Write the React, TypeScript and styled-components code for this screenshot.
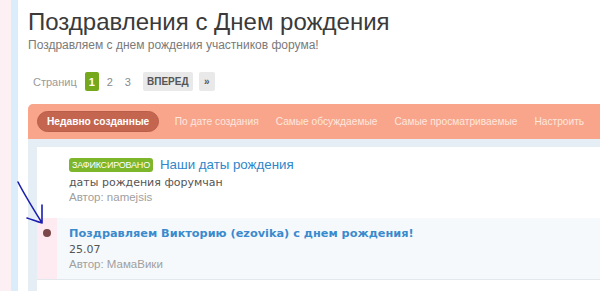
import React from 'react';
import styled, { createGlobalStyle } from 'styled-components';

const GlobalStyle = createGlobalStyle`
  html, body {
    margin: 0;
    padding: 0;
    background: #ffffff;
  }
  body {
    font-family: "Liberation Sans", Arial, sans-serif;
    overflow: hidden;
  }
`;

const tabs = ['По дате создания', 'Самые обсуждаемые', 'Самые просматриваемые', 'Настроить'];

export default function App() {
  return (
    <Page>
      <GlobalStyle />
      <Gutter />
      <Stripe />
      <Main>
        <Title>Поздравления с Днем рождения</Title>
        <Subtitle>Поздравляем с днем рождения участников форума!</Subtitle>

        <PageNav>
          <NavLabel>Страниц</NavLabel>
          <PageNum current>1</PageNum>
          <PageNum>2</PageNum>
          <PageNum>3</PageNum>
          <NavButton>ВПЕРЕД</NavButton>
          <NavButton small>»</NavButton>
        </PageNav>

        <TabBar>
          <ActiveTab>Недавно созданные</ActiveTab>
          {tabs.map((t) => (
            <Tab key={t}>{t}</Tab>
          ))}
        </TabBar>

        <ListWrap>
          <List>
            <Thread>
              <Marker />
              <ThreadBody>
                <TitleRow>
                  <Sticky>ЗАФИКСИРОВАНО</Sticky>
                  <ThreadLink>Наши даты рождения</ThreadLink>
                </TitleRow>
                <Snippet>даты рождения форумчан</Snippet>
                <Author>Автор: namejsis</Author>
              </ThreadBody>
            </Thread>

            <Thread unread>
              <Marker unread>
                <Dot />
              </Marker>
              <ThreadBody>
                <ThreadLink bold>Поздравляем Викторию (ezovika) с днем рождения!</ThreadLink>
                <Snippet>25.07</Snippet>
                <Author>Автор: МамаВики</Author>
              </ThreadBody>
            </Thread>
          </List>
        </ListWrap>
      </Main>

      {/* нарисованная от руки стрелка поверх страницы */}
      <Arrow width="60" height="60" viewBox="0 0 60 60">
        <path
          d="M8 2 C 14 14, 24 30, 32 43 M32 25 C 32 32, 32 38, 32 43 M17 38 C 23 40, 28 42, 32 43"
          fill="none"
          stroke="#1b1fb0"
          strokeWidth="1.6"
          strokeLinecap="round"
        />
      </Arrow>
    </Page>
  );
}

const Page = styled.div`
  position: relative;
  display: flex;
  width: 600px;
  height: 291px;
  overflow: hidden;
  background: #ffffff;
`;

const Gutter = styled.div`
  width: 11px;
  flex: none;
  background: #fcf0f5;
`;

const Stripe = styled.div`
  width: 7px;
  flex: none;
  background: #dbecfa;
`;

const Main = styled.div`
  flex: 1;
  padding-left: 10px;
  display: flex;
  flex-direction: column;
  min-width: 0;
`;

const Title = styled.h1`
  margin: 7px 0 0;
  font-weight: normal;
  font-size: 24px;
  line-height: 30px;
  color: #3a3a3a;
  white-space: nowrap;
`;

const Subtitle = styled.div`
  margin-top: 0;
  font-size: 12px;
  line-height: 16px;
  color: #7a7a7a;
`;

const PageNav = styled.div`
  margin-top: 19px;
  display: flex;
  align-items: center;
  height: 19px;
  padding-left: 5px;
`;

const NavLabel = styled.span`
  font-size: 11px;
  color: #9a9a9a;
  margin-right: 8px;
`;

const PageNum = styled.span<{ current?: boolean }>`
  display: inline-flex;
  align-items: center;
  justify-content: center;
  min-width: 14px;
  height: 19px;
  margin-right: 4px;
  border-radius: 2px;
  font-size: 11px;
  font-weight: ${({ current }) => (current ? 'bold' : 'normal')};
  color: ${({ current }) => (current ? '#ffffff' : '#8a8a8a')};
  background: ${({ current }) => (current ? '#76a81c' : 'transparent')};
`;

const NavButton = styled.span<{ small?: boolean }>`
  display: inline-flex;
  align-items: center;
  justify-content: center;
  height: 19px;
  width: ${({ small }) => (small ? '16px' : '50px')};
  margin-left: ${({ small }) => (small ? '6px' : '4px')};
  background: #e9e9e9;
  border-radius: 2px;
  font-size: 10px;
  font-weight: bold;
  color: #555555;
`;

const TabBar = styled.div`
  margin-top: 13px;
  height: 35px;
  flex: none;
  display: flex;
  align-items: center;
  padding-left: 9px;
  background: #f9a58b;
  border-radius: 5px 0 0 0;
  white-space: nowrap;
`;

const ActiveTab = styled.span`
  display: inline-flex;
  align-items: center;
  height: 19px;
  padding: 0 9px;
  margin-right: 7px;
  border-radius: 11px;
  border: 1px solid #b85e4b;
  background: #c4654f;
  font-size: 10.2px;
  font-weight: bold;
  color: #ffffff;
`;

const Tab = styled.span`
  padding: 0 8.5px;
  font-size: 10.2px;
  color: #fde7de;
`;

const ListWrap = styled.div`
  flex: 1;
  background: #e6eef5;
  padding: 8px 0 0 9px;
`;

const List = styled.div`
  background: #ffffff;
  height: 100%;
`;

const Thread = styled.div<{ unread?: boolean }>`
  display: flex;
  background: ${({ unread }) => (unread ? '#f6f9fb' : '#ffffff')};
  border-bottom: 1px solid ${({ unread }) => (unread ? '#e3e8ec' : '#ffffff')};
  height: ${({ unread }) => (unread ? '61px' : '70px')};
`;

const Marker = styled.div<{ unread?: boolean }>`
  width: 20px;
  flex: none;
  background: ${({ unread }) => (unread ? '#fdebf1' : 'transparent')};
  display: flex;
  justify-content: center;
  padding-top: 11px;
`;

const Dot = styled.span`
  width: 8px;
  height: 8px;
  border-radius: 50%;
  background: #7a4848;
`;

const ThreadBody = styled.div`
  padding: 8px 0 0 12px;
  display: flex;
  flex-direction: column;
  white-space: nowrap;
`;

const TitleRow = styled.div`
  display: flex;
  align-items: center;
  height: 20px;
`;

const Sticky = styled.span`
  display: inline-flex;
  align-items: center;
  height: 14px;
  padding: 0 3px;
  margin-right: 7px;
  border-radius: 3px;
  background: #7db52b;
  color: #ffffff;
  font-size: 9px;
  letter-spacing: -0.2px;
`;

const ThreadLink = styled.span<{ bold?: boolean }>`
  font-family: ${({ bold }) => (bold ? '"DejaVu Sans", Verdana, sans-serif' : 'inherit')};
  font-size: ${({ bold }) => (bold ? '11.3px' : '13.3px')};
  line-height: ${({ bold }) => (bold ? '16px' : '20px')};
  font-weight: ${({ bold }) => (bold ? 'bold' : 'normal')};
  color: ${({ bold }) => (bold ? '#3a8bcd' : '#2f86c9')};
`;

const Snippet = styled.div`
  font-family: "DejaVu Sans", Verdana, sans-serif;
  font-size: 11px;
  line-height: 15px;
  color: #555555;
`;

const Author = styled.div`
  font-size: 11.5px;
  line-height: 15px;
  color: #a0a0a0;
`;

const Arrow = styled.svg`
  position: absolute;
  left: 10px;
  top: 180px;
  pointer-events: none;
`;
